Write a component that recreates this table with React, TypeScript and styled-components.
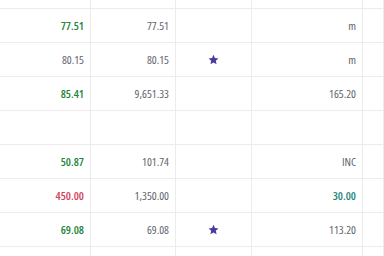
import React from "react";
import styled, { createGlobalStyle } from "styled-components";

const Global = createGlobalStyle`
  html, body { margin: 0; padding: 0; background: #ffffff; }
  body { overflow: hidden; }
`;

const Grid = styled.div`
  display: grid;
  grid-template-columns: 91px 85px 76px 111px 1fr;
  width: 384px;
  height: 256px;
  overflow: hidden;
  font-family: "Open Sans", "Liberation Sans", sans-serif;
  font-stretch: 80%;
  font-size: 11.5px;
  color: #5f6368;
`;

type Tone = "plain" | "green" | "red" | "teal";

const toneColor: Record<Tone, string> = {
  plain: "#62646a",
  green: "#24843c",
  red: "#d2405a",
  teal: "#23857a",
};

const Cell = styled.div<{ $h: number; $tone?: Tone; $center?: boolean }>`
  box-sizing: border-box;
  height: ${(p) => p.$h}px;
  border-right: 1px solid #ececec;
  border-bottom: 1px solid #ececec;
  display: flex;
  align-items: center;
  justify-content: ${(p) => (p.$center ? "center" : "flex-end")};
  padding-right: ${(p) => (p.$center ? 0 : 6)}px;
  color: ${(p) => toneColor[p.$tone ?? "plain"]};
  font-weight: ${(p) => (p.$tone && p.$tone !== "plain" ? 600 : 400)};
  white-space: nowrap;
`;

const Star = () => (
  <svg width="11" height="11" viewBox="0 0 24 24">
    <path
      d="M12 1.8l3.1 7.1 7.7.7-5.8 5.1 1.7 7.6L12 18.3l-6.7 4 1.7-7.6L1.2 9.6l7.7-.7z"
      fill="#4a3a9e"
    />
  </svg>
);

type Val = { text?: string; tone?: Tone };
type Row = { a: Val; b: Val; star: boolean; d: Val };

const rows: Row[] = [
  { a: { text: "77.51", tone: "green" }, b: { text: "77.51" }, star: false, d: { text: "m" } },
  { a: { text: "80.15" }, b: { text: "80.15" }, star: true, d: { text: "m" } },
  { a: { text: "85.41", tone: "green" }, b: { text: "9,651.33" }, star: false, d: { text: "165.20" } },
  { a: {}, b: {}, star: false, d: {} },
  { a: { text: "50.87", tone: "green" }, b: { text: "101.74" }, star: false, d: { text: "INC" } },
  { a: { text: "450.00", tone: "red" }, b: { text: "1,350.00" }, star: false, d: { text: "30.00", tone: "teal" } },
  { a: { text: "69.08", tone: "green" }, b: { text: "69.08" }, star: true, d: { text: "113.20" } },
  { a: {}, b: {}, star: false, d: {} },
];

export default function App() {
  return (
    <>
      <Global />
      <Grid>
        {[0, 1, 2, 3, 4].map((i) => (
          <Cell key={`top-${i}`} $h={9} />
        ))}
        {rows.map((r, i) => (
          <React.Fragment key={i}>
            <Cell $h={34} $tone={r.a.tone}>{r.a.text}</Cell>
            <Cell $h={34} $tone={r.b.tone}>{r.b.text}</Cell>
            <Cell $h={34} $center>{r.star ? <Star /> : null}</Cell>
            <Cell $h={34} $tone={r.d.tone}>{r.d.text}</Cell>
            <Cell $h={34} />
          </React.Fragment>
        ))}
      </Grid>
    </>
  );
}
